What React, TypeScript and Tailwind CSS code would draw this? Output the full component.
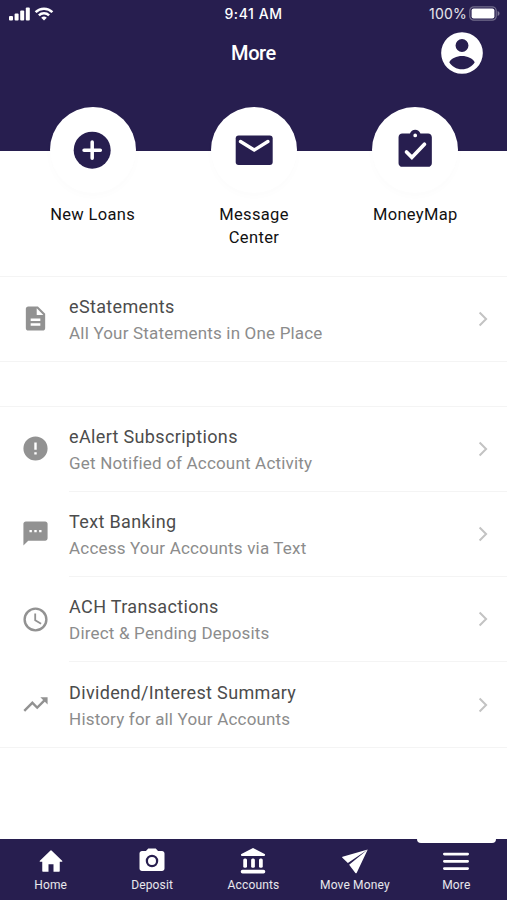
import type { ReactNode } from "react";

function Icon({ children, className }: { children: ReactNode; className: string }) {
  return (
    <svg viewBox="0 0 24 24" fill="currentColor" fillRule="evenodd" className={className}>
      {children}
    </svg>
  );
}

const shortcuts = [
  {
    label: "New Loans",
    icon: (
      <>
        <circle cx="12" cy="12" r="10" />
        <path d="M12 7.6v8.8M7.6 12h8.8" stroke="white" strokeWidth="1.9" strokeLinecap="round" />
      </>
    ),
  },
  {
    label: "Message Center",
    icon: (
      <>
        <rect x="2" y="4" width="20" height="16" rx="1.6" />
        <path d="m4.6 7.3 7.4 4.6 7.4-4.6" fill="none" stroke="white" strokeWidth="1.8" strokeLinecap="round" />
      </>
    ),
  },
  {
    label: "MoneyMap",
    icon: (
      <>
        <path d="M19 3h-4.18C14.4 1.84 13.3 1 12 1s-2.4.84-2.82 2H5c-1.1 0-2 .9-2 2v14c0 1.1.9 2 2 2h14c1.1 0 2-.9 2-2V5c0-1.1-.9-2-2-2zm-7 0a1 1 0 1 1 0 2 1 1 0 0 1 0-2z" />
        <path d="m7.3 13 2.9 2.9 6.8-7.1" fill="none" stroke="white" strokeWidth="2" strokeLinecap="round" />
      </>
    ),
  },
];

const statements = [
  {
    title: "eStatements",
    detail: "All Your Statements in One Place",
    icon: <path d="M14 2H6c-1.1 0-2 .9-2 2v16c0 1.1.9 2 2 2h12c1.1 0 2-.9 2-2V8l-6-6zm2 16H8v-2h8v2zm0-4H8v-2h8v2zm-3-5V3.5L18.5 9H13z" />,
  },
];

const services = [
  {
    title: "eAlert Subscriptions",
    detail: "Get Notified of Account Activity",
    icon: <path d="M12 2a10 10 0 1 0 0 20 10 10 0 0 0 0-20zm1 15h-2v-2h2v2zm0-4h-2V7h2v6z" />,
  },
  {
    title: "Text Banking",
    detail: "Access Your Accounts via Text",
    icon: <path d="M20 2H4c-1.1 0-2 .9-2 2v18l4-4h14c1.1 0 2-.9 2-2V4c0-1.1-.9-2-2-2zM9 11H7V9h2v2zm4 0h-2V9h2v2zm4 0h-2V9h2v2z" />,
  },
  {
    title: "ACH Transactions",
    detail: "Direct & Pending Deposits",
    icon: <path d="M12 2a10 10 0 1 0 0 20 10 10 0 0 0 0-20zm0 18a8 8 0 1 1 0-16 8 8 0 0 1 0 16zM12.5 7H11v6l5.25 3.15.75-1.23-4.5-2.67z" />,
  },
  {
    title: "Dividend/Interest Summary",
    detail: "History for all Your Accounts",
    icon: <path d="m16 6 2.29 2.29-4.88 4.88-4-4L2 16.59 3.41 18l6-6 4 4 6.3-6.29L22 12V6z" />,
  },
];

const tabs = [
  { label: "Home", icon: <path d="M10 20.5v-6h4v6h4.5c.3 0 .5-.2.5-.5v-7.5h1.6c.5 0 .6-.5.3-.8L12.4 3.6a.6.6 0 0 0-.8 0L3.1 11.7c-.3.3-.2.8.3.8H5V20c0 .3.2.5.5.5z" /> },
  {
    label: "Deposit",
    icon: <path d="M9 2 7.17 4H4c-1.1 0-2 .9-2 2v12c0 1.1.9 2 2 2h16c1.1 0 2-.9 2-2V6c0-1.1-.9-2-2-2h-3.17L15 2H9zm3 5a5 5 0 1 1 0 10 5 5 0 0 1 0-10zm0 1.8a3.2 3.2 0 1 0 0 6.4 3.2 3.2 0 0 0 0-6.4z" />,
  },
  {
    label: "Accounts",
    icon: (
      <>
        <path d="M12 1.5 2.7 6.3c-.6.3-.4 1.7.3 1.7h18c.7 0 .9-1.4.3-1.7z" />
        <rect x="4.2" y="10" width="3" height="7.4" rx="1.2" />
        <rect x="10.5" y="10" width="3" height="7.4" rx="1.2" />
        <rect x="16.8" y="10" width="3" height="7.4" rx="1.2" />
        <rect x="2.2" y="19" width="19.6" height="3" rx="1.4" />
      </>
    ),
  },
  { label: "Move Money", icon: <path d="M22.2 2.8 2 8.5c-.4.1-.4.6-.1.9l4.4 4.2zM22.2 2.8 7.3 14.9l5 6.7c.3.4.8.3 1-.1z" /> },
  {
    label: "More",
    icon: <path d="M2.7 6.4h18.6M2.7 12.2h18.6M2.7 18h18.6" stroke="currentColor" strokeWidth="2.2" strokeLinecap="round" />,
  },
];

function StatusBar() {
  return (
    <div className="grid h-[27px] grid-cols-3 items-center px-2 font-[Inter,sans-serif] text-[14px]">
      <div className="flex items-center gap-1">
        <svg viewBox="0 0 22 14" className="h-3.5 w-[22px]" fill="currentColor">
          <rect x="1" y="9" width="4" height="4.5" rx="1" />
          <rect x="6.6" y="6.4" width="4" height="7.1" rx="1" />
          <rect x="12.2" y="3.4" width="4" height="10.1" rx="1" />
          <rect x="17.8" y="0.4" width="4" height="13.1" rx="1" />
        </svg>
        <svg viewBox="0 0 20 14" className="h-3.5 w-5" fill="none" stroke="currentColor" strokeWidth="2.5">
          <path d="M1.6 5.1a12 12 0 0 1 16.8 0M4.9 8.4a7.3 7.3 0 0 1 10.2 0" />
          <path d="M10 13.6 7.2 10.8a4 4 0 0 1 5.6 0z" fill="currentColor" stroke="none" />
        </svg>
      </div>
      <span className="text-center font-medium tracking-[0.55px]">9:41 AM</span>
      <div className="-mr-px flex items-center justify-end gap-0.5">
        <span className="tracking-[0.2px] text-white/90">100%</span>
        <svg viewBox="0 0 31 15" className="h-[15px] w-[31px]" fill="currentColor">
          <rect x="0.8" y="0.8" width="26.4" height="13.4" rx="4" fill="none" stroke="currentColor" strokeOpacity="0.35" strokeWidth="1.2" />
          <rect x="2.6" y="2.6" width="22.8" height="9.8" rx="2" />
          <path d="M28.6 5v5c1.3-.5 1.9-1.4 1.9-2.5S29.9 5.5 28.6 5z" opacity="0.4" />
        </svg>
      </div>
    </div>
  );
}

function Row({ title, detail, icon, divider }: { title: string; detail: string; icon: ReactNode; divider: boolean }) {
  return (
    <div className="flex h-[85.3px] items-stretch pl-[20.5px]">
      <Icon className="mr-[19.6px] mb-px size-[29px] shrink-0 self-center text-[#929292]">{icon}</Icon>
      <div className={divider ? "flex flex-1 items-center justify-between border-b border-[#f4f4f4] pr-[19.5px]" : "flex flex-1 items-center justify-between pr-[19.5px]"}>
        <div className="pt-0.5">
          <h2 className="text-[18px] leading-[26px] tracking-[0.34px] text-[#4c4c4c]">{title}</h2>
          <p className="text-[17px] leading-[26px] tracking-[0.18px] text-[#8c8c8c]">{detail}</p>
        </div>
        <svg viewBox="0 0 10 16" className="h-4 w-2.5" fill="none" stroke="#c3c3c3" strokeWidth="2">
          <path d="m1.6 1.5 6.5 6.5-6.5 6.5" />
        </svg>
      </div>
    </div>
  );
}

export default function App() {
  return (
    <div className="flex h-[900px] w-full flex-col bg-white font-[Roboto,sans-serif]">
      <header className="h-[151px] shrink-0 bg-[#271e4f] text-white">
        <StatusBar />
        <div className="grid grid-cols-3 items-center px-5 pt-px">
          <h1 className="col-start-2 text-center text-[20px] font-medium tracking-[-0.4px]">More</h1>
          <Icon className="size-[50px] justify-self-end">
            <path d="M12 2a10 10 0 1 0 0 20 10 10 0 0 0 0-20zm0 3.3a3.1 3.1 0 1 1 0 6.2 3.1 3.1 0 0 1 0-6.2zm0 14.5c-2.6 0-5-1.5-6.1-3.4 1-1.9 3.5-3 6.1-3s5.1 1.1 6.1 3c-1.1 1.9-3.5 3.4-6.1 3.4z" />
          </Icon>
        </div>
      </header>

      <section className="relative -mt-11 grid h-[168.5px] shrink-0 grid-cols-3 pr-[11px] pl-3">
        {shortcuts.map((item) => (
          <div key={item.label} className="flex flex-col items-center">
            <div className="flex size-[86px] items-center justify-center rounded-full bg-white shadow-[0_3px_8px_rgba(0,0,0,0.015)]">
              <Icon className="size-[44.4px] text-[#271e4f]">{item.icon}</Icon>
            </div>
            <span className="mt-[11px] w-[100px] text-center text-[16.5px] leading-[22.5px] tracking-[0.35px] text-[#111]">{item.label}</span>
          </div>
        ))}
      </section>

      <section className="mb-11 h-[86px] shrink-0 border-y border-[#f4f4f4]">
        {statements.map((item) => (
          <Row key={item.title} {...item} divider={false} />
        ))}
      </section>
      <section className="h-[342px] shrink-0 border-y border-[#f4f4f4]">
        {services.map((item, i) => (
          <Row key={item.title} {...item} divider={i < services.length - 1} />
        ))}
      </section>

      <nav className="mt-auto grid h-[61px] shrink-0 grid-cols-5 bg-[#271e4f] text-white">
        {tabs.map((tab) => (
          <div key={tab.label} className="relative flex flex-col items-center pt-[7px]">
            {tab.label === "More" && <div className="absolute top-0 h-1 w-[79px] rounded-b bg-white" />}
            <Icon className="size-[30px]">{tab.icon}</Icon>
            <span className="mt-px text-[12px] leading-[17px] tracking-[0.15px] text-white/90">{tab.label}</span>
          </div>
        ))}
      </nav>
    </div>
  );
}
